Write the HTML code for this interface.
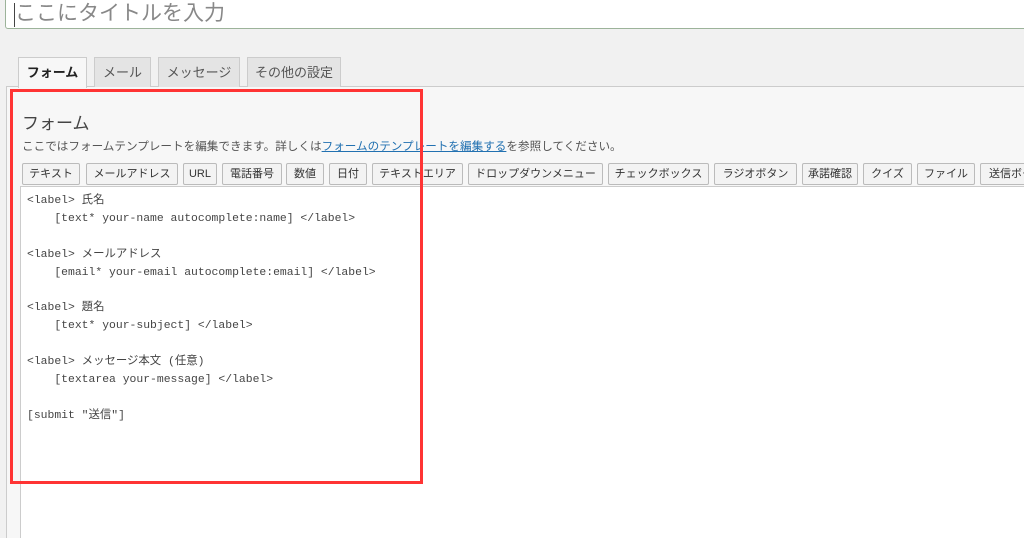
<!DOCTYPE html>
<html><head><meta charset="utf-8"><style>
*{box-sizing:border-box;margin:0;padding:0}
html,body{width:1024px;height:538px;overflow:hidden}
body{background:#f1f1f1;font-family:"Liberation Sans","Noto Sans CJK JP",sans-serif;position:relative;color:#333}
.title{position:absolute;left:5px;top:-12px;width:1040px;height:41px;background:#fff;border:1px solid #9cb39a;border-radius:3px;font-size:21px;color:#888;padding:13px 0 0 9px;line-height:24px}
.title:before{content:"";position:absolute;left:8px;top:14px;width:1px;height:24px;background:#444}
.tab{position:absolute;top:57px;height:30px;border:1px solid #ccc;border-bottom:none;background:#e4e4e4;font-size:13px;color:#555;text-align:center;line-height:29px}
.tab.a{background:#f7f7f7;color:#222;font-weight:bold;height:31px;z-index:2}
.panel{position:absolute;left:6px;top:86px;width:1030px;height:460px;background:#f7f7f7;border:1px solid #ccc}
h2{position:absolute;left:22px;top:109px;font-size:17px;font-weight:normal;color:#444}
.desc{position:absolute;left:22px;top:138px;font-size:11.6px;color:#555;white-space:nowrap}
.desc a{color:#2271b1;text-decoration:underline}
.b{position:absolute;top:163px;height:22px;border:1px solid #bbb;border-radius:2px;background:#f3f3f3;font-size:11px;color:#333;text-align:center;line-height:20px;white-space:nowrap;overflow:hidden}
.ta{position:absolute;left:20px;top:186px;width:1020px;height:360px;background:#fff;border:1px solid #ccc;border-right:none}
pre{position:absolute;left:27px;top:193px;font-family:"Liberation Mono","Noto Sans CJK JP",monospace;font-size:11.4px;line-height:17.9px;color:#444}
.red{position:absolute;left:10px;top:89px;width:413px;height:395px;border:3px solid #ff3434}
</style></head><body>
<div class="title">ここにタイトルを入力</div>
<div class="panel"></div>
<div class="tab a" style="left:18px;width:69px">フォーム</div>
<div class="tab" style="left:94px;width:57px">メール</div>
<div class="tab" style="left:158px;width:82px">メッセージ</div>
<div class="tab" style="left:247px;width:94px">その他の設定</div>
<h2>フォーム</h2>
<div class="desc">ここではフォームテンプレートを編集できます。詳しくは<a>フォームのテンプレートを編集する</a>を参照してください。</div>
<div class="b" style="left:22px;width:58px">テキスト</div>
<div class="b" style="left:86px;width:92px">メールアドレス</div>
<div class="b" style="left:183px;width:34px">URL</div>
<div class="b" style="left:222px;width:60px">電話番号</div>
<div class="b" style="left:286px;width:38px">数値</div>
<div class="b" style="left:329px;width:38px">日付</div>
<div class="b" style="left:372px;width:91px">テキストエリア</div>
<div class="b" style="left:468px;width:135px">ドロップダウンメニュー</div>
<div class="b" style="left:608px;width:101px">チェックボックス</div>
<div class="b" style="left:714px;width:83px">ラジオボタン</div>
<div class="b" style="left:802px;width:56px">承諾確認</div>
<div class="b" style="left:863px;width:49px">クイズ</div>
<div class="b" style="left:917px;width:58px">ファイル</div>
<div class="b" style="left:980px;width:60px;text-align:left;padding-left:8px">送信ボタン</div>
<div class="ta"></div>
<pre>&lt;label&gt; 氏名
    [text* your-name autocomplete:name] &lt;/label&gt;

&lt;label&gt; メールアドレス
    [email* your-email autocomplete:email] &lt;/label&gt;

&lt;label&gt; 題名
    [text* your-subject] &lt;/label&gt;

&lt;label&gt; メッセージ本文 (任意)
    [textarea your-message] &lt;/label&gt;

[submit "送信"]</pre>
<div class="red"></div>
</body></html>
